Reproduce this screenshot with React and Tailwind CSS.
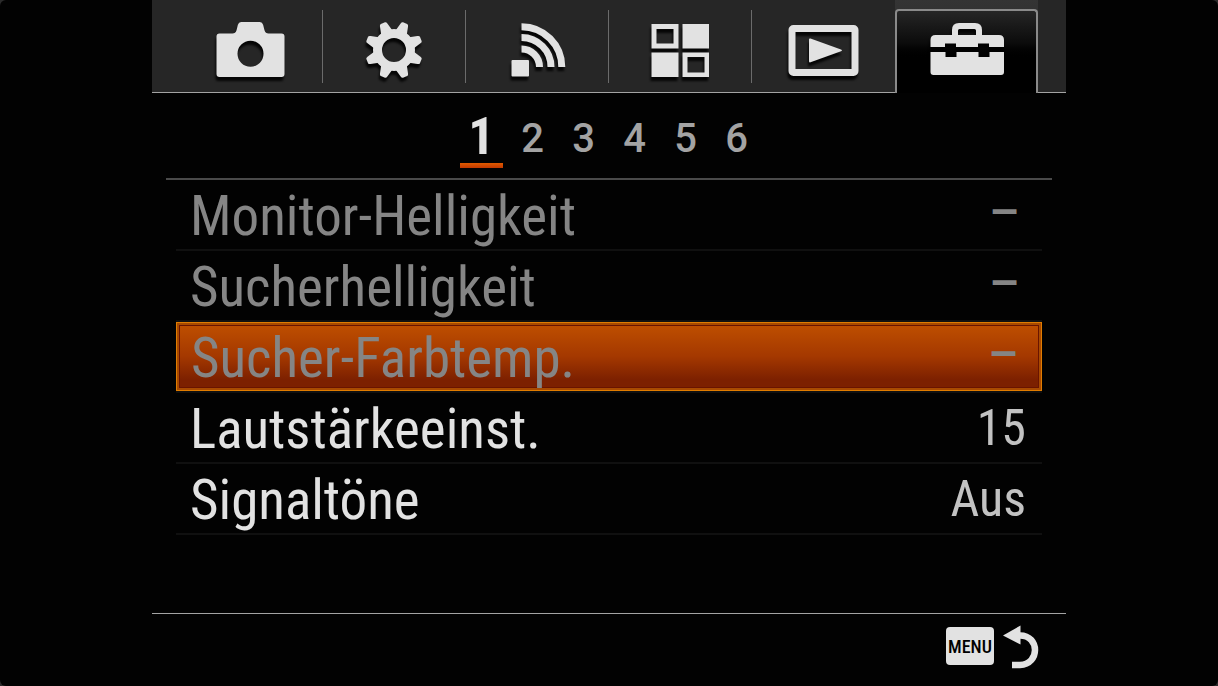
import clsx from "clsx";

function Glyph({ children }) {
  return (
    <svg
      viewBox="0 0 80 64"
      aria-hidden="true"
      className="w-20 h-16 mx-auto text-[#e2e2e2] fill-current drop-shadow-[-1px_4px_1px_rgba(0,0,0,0.85)]"
    >
      {children}
    </svg>
  );
}

function CameraIcon() {
  return (
    <Glyph>
      <path
        fillRule="evenodd"
        d="M8.5 15.5h13q3 0 4-3.2l1.4-5.6q.8-2.7 3.2-2.7h18.8q2.4 0 3.2 2.7l1.4 5.6q1 3.2 4 3.2h13q3 0 3 3v37.5q0 3-3 3h-62q-3 0-3-3v-37.5q0-3 3-3zM39.500 22.700a13 13 0 1 0 0 26a13 13 0 1 0 0-26z"
      />
    </Glyph>
  );
}

const TEETH = [22.5, 67.5, 112.5, 157.5, 202.5, 247.5, 292.5, 337.5];

function GearIcon() {
  return (
    <Glyph>
      <circle cx="40" cy="32" r="16.5" fill="none" stroke="currentColor" strokeWidth="9" />
      {TEETH.map((deg) => (
        <path key={deg} transform={`rotate(${deg} 40 32)`} d="M34 13l2-8q.4-2 1.800-2h4.400q1.400 0 1.800 2l2 8z" />
      ))}
    </Glyph>
  );
}

function WirelessIcon() {
  return (
    <Glyph>
      <rect x="14.5" y="42" width="17.5" height="16.5" rx="1" />
      <g fill="none" stroke="currentColor" strokeWidth="7">
        <path d="M24.5 31a18 18 0 0 1 18 18" />
        <path d="M24.5 19.5a29.5 29.5 0 0 1 29.5 29.5" />
        <path d="M24.5 8.7a40.3 40.3 0 0 1 40.3 40.3" />
      </g>
    </Glyph>
  );
}

function ApplicationIcon() {
  return (
    <Glyph>
      <path fillRule="evenodd" d="M11.5 6h27v24.5h-27zM16.5 11v14.5h17v-14.5z" />
      <path d="M42.5 6h26.5v24.5h-26.5zM11.5 34.5h27v24.5h-27z" />
      <path fillRule="evenodd" d="M42.5 34.5h26.5v24.5h-26.5zM47.5 39v15.5h17v-15.5z" />
    </Glyph>
  );
}

function PlaybackIcon() {
  return (
    <Glyph>
      <rect x="8" y="10.5" width="63" height="44" rx="1.5" fill="none" stroke="currentColor" strokeWidth="7" />
      <path d="M25 21.5q0-1.5 1.500-1l30.500 11q2 .9 0 1.800l-30.500 11q-1.500.5-1.500-1z" />
    </Glyph>
  );
}

function ToolboxIcon() {
  return (
    <Glyph>
      <path
        fillRule="evenodd"
        d="M3.5 29v-7q0-5 5-5h16.500v-5q0-7 7-7h16q7 0 7 7v5h17q5 0 5 5v7h-15v-3.500h-11v3.500h-22v-3.500h-11v3.500zM31 17h18v-4.500q0-1.500-1.500-1.500h-15q-1.500 0-1.500 1.500z"
      />
      <path d="M3.5 34h15v5h11v-5h22v5h11v-5h14.500v20q0 3-3 3h-67.500q-3 0-3-3z" />
    </Glyph>
  );
}

const TABS = [
  { id: "camera", label: "Kamera", Icon: CameraIcon },
  { id: "custom", label: "Benutzereinstellungen", Icon: GearIcon },
  { id: "wireless", label: "Drahtlos", Icon: WirelessIcon },
  { id: "apps", label: "Applikation", Icon: ApplicationIcon },
  { id: "playback", label: "Wiedergabe", Icon: PlaybackIcon },
  { id: "setup", label: "Einstellung", Icon: ToolboxIcon },
];

const PAGES = [1, 2, 3, 4, 5, 6];

const ITEMS = [
  { label: "Monitor-Helligkeit", value: "–", disabled: true },
  { label: "Sucherhelligkeit", value: "–", disabled: true },
  { label: "Sucher-Farbtemp.", value: "–", disabled: true, selected: true },
  { label: "Lautstärkeeinst.", value: "15" },
  { label: "Signaltöne", value: "Aus" },
];

function TabBar({ active }) {
  return (
    <nav className="flex h-[93px] bg-[#262626]">
      <div className="w-7 border-b border-[#a3a3a3]" />
      {TABS.map(({ id, label, Icon }, i) =>
        id === active ? (
          <div key={id} className="flex-1 pt-[9px] bg-linear-to-b from-[#343434] to-[#262626]">
            <button
              aria-label={label}
              aria-current="true"
              className="flex items-start w-full h-full pt-[7px] rounded-t-[4px] border-2 border-b-0 border-[#8a8a8a] bg-linear-to-b from-[#262626] via-[#0b0b0b] via-40% to-black to-60%"
            >
              <Icon />
            </button>
          </div>
        ) : (
          <button key={id} aria-label={label} className="flex flex-1 items-start pt-[10px] border-b border-[#a3a3a3]">
            <span className="flex-1 pt-2">
              <Icon />
            </span>
            {i < TABS.length - 2 && <span className="w-px h-[73px] bg-[#6b6b6b]" />}
          </button>
        )
      )}
      <div className="w-7 border-b border-[#a3a3a3]" />
    </nav>
  );
}

function Pager({ current }) {
  return (
    <div className="mx-[14px] h-[87px] flex justify-center pt-[18px] border-b-2 border-[#4a4a4a]">
      {PAGES.map((n) => (
        <button
          key={n}
          className={clsx(
            "w-[51px] h-[58px] flex flex-col items-center",
            n === current ? "text-[#e2e2e2]" : "text-[#a3a3a3]"
          )}
        >
          {n === current ? (
            <>
              <span className="h-[52px] leading-[52px] text-[52px] font-bold">{n}</span>
              <span className="w-[43px] h-[5px] bg-linear-to-b from-[#e05a00] to-[#c03800]" />
            </>
          ) : (
            <span className="leading-[56px] text-[40px] font-['Roboto',sans-serif] font-medium">{n}</span>
          )}
        </button>
      ))}
    </div>
  );
}

function MenuItem({ label, value, disabled, selected }) {
  return (
    <li className="h-[71px] flex border-b-2 border-[#101010]">
      <button
        className={clsx(
          "flex-1 flex items-center justify-between text-left pl-[14px] pr-4",
          selected &&
            "border border-[#e07c00] bg-linear-to-b from-[#c05000] via-[#a43800] to-[#7c2000] to-85% shadow-[inset_0_0_0_2px_#a84a00,inset_0_0_0_3px_#6a1400]",
          disabled ? "text-[#858585]" : "text-[#e2e2e2]"
        )}
      >
        <span className="text-[55px] leading-[64px] pt-[2px]">{label}</span>
        {value === "–" ? (
          <span className="pr-2 pb-3 text-[48px] leading-[48px] font-bold font-['Liberation_Sans',sans-serif]">{value}</span>
        ) : (
          <span className="text-[50px] leading-[60px] text-[#c2c2c2]">{value}</span>
        )}
      </button>
    </li>
  );
}

export default function App() {
  return (
    <div className="min-h-screen flex bg-[#2b2b2b] font-['Roboto_Condensed','Liberation_Sans',sans-serif]">
      <div className="flex-1 px-38 rounded-md bg-[#020202] flex flex-col">
        <TabBar active="setup" />
        <Pager current={1} />
        <ul className="mx-6">
          {ITEMS.map((item) => (
            <MenuItem key={item.label} {...item} />
          ))}
        </ul>
        <footer className="mt-auto h-[73px] pr-[26px] flex items-start justify-end border-t border-[#a3a3a3]">
          <button className="pt-[11px] flex gap-2" aria-label="MENU zurück">
            <span className="mt-[2px] w-12 h-[38px] flex items-center justify-center rounded-[4px] bg-[#e2e2e2] text-black text-[18px] font-medium">
              MENU
            </span>
            <svg viewBox="0 0 38 46" aria-hidden="true" className="w-[38px] h-[46px] text-[#e2e2e2]">
              <path d="M18 10.500c20 0 20 29 0 29.500h-8" fill="none" stroke="currentColor" strokeWidth="6.500" />
              <path d="M1 10.500l17.500-10v19z" fill="currentColor" />
            </svg>
          </button>
        </footer>
      </div>
    </div>
  );
}
